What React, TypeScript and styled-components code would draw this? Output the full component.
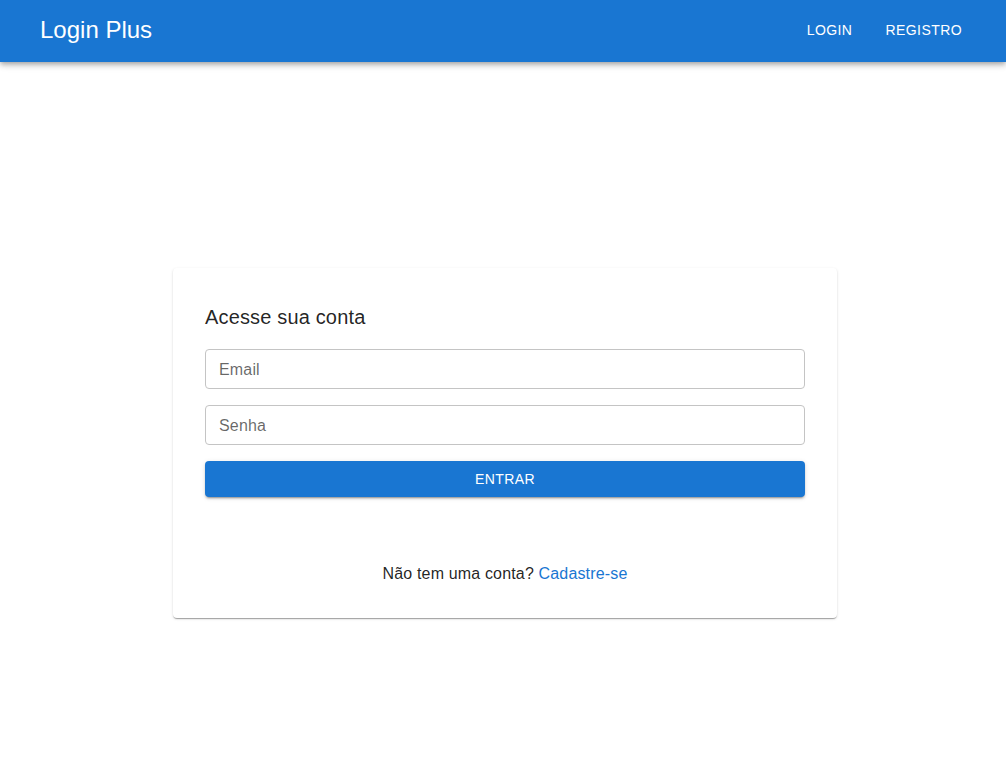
import React from "react";
import styled, { createGlobalStyle } from "styled-components";

const GlobalStyle = createGlobalStyle`
  *, *::before, *::after { box-sizing: border-box; }
  body {
    margin: 0;
    background: #fff;
    color: rgba(0, 0, 0, 0.87);
    font-family: "Liberation Sans", Arial, sans-serif;
    font-size: 16px;
    line-height: 24px;
    letter-spacing: 0.01em;
  }
`;

const Page = styled.div`
  display: flex;
  flex-direction: column;
  min-height: 100vh;
`;

const AppBar = styled.header`
  display: flex;
  align-items: center;
  justify-content: space-between;
  padding: 12px 36px 14px 40px;
  background: #1976d2;
  color: #fff;
  box-shadow:
    0 2px 4px -1px rgba(0, 0, 0, 0.2),
    0 4px 5px 0 rgba(0, 0, 0, 0.14),
    0 1px 10px 0 rgba(0, 0, 0, 0.12);
`;

const Brand = styled.div`
  font-size: 24px;
  line-height: 36px;
  letter-spacing: normal;
`;

const Nav = styled.nav`
  display: flex;
  gap: 16px;
`;

const NavLink = styled.a`
  min-width: 64px;
  padding: 6px 8px;
  border-radius: 4px;
  color: inherit;
  font-size: 14px;
  font-weight: 500;
  line-height: 24px;
  letter-spacing: 0.03em;
  text-align: center;
  text-decoration: none;
  text-transform: uppercase;
`;

const Main = styled.main`
  display: flex;
  flex: 1;
  flex-direction: column;
  align-items: center;
  justify-content: center;
  padding: 43px 24px 0 28px;
`;

const Card = styled.section`
  width: 100%;
  max-width: 664px;
  padding: 33px 32px 32px;
  border-radius: 4px;
  background: #fff;
  box-shadow:
    0 2px 1px -1px rgba(0, 0, 0, 0.2),
    0 1px 1px 0 rgba(0, 0, 0, 0.14),
    0 1px 3px 0 rgba(0, 0, 0, 0.12);
`;

const Title = styled.h1`
  margin: 0;
  font-size: 20px;
  font-weight: 400;
  line-height: 32px;
`;

const Form = styled.form`
  display: flex;
  flex-direction: column;
  gap: 16px;
  margin-top: 16px;
`;

const Field = styled.input`
  width: 100%;
  height: 40px;
  padding: 9px 13px 7px;
  border: 1px solid #c4c4c4;
  border-radius: 4px;
  background: transparent;
  color: inherit;
  font: inherit;
  letter-spacing: inherit;

  &::placeholder {
    color: rgba(0, 0, 0, 0.6);
    opacity: 1;
  }

  &:focus {
    border-color: #1976d2;
    outline: none;
  }
`;

const SubmitButton = styled.button`
  padding: 6px 16px;
  border: 0;
  border-radius: 4px;
  background: #1976d2;
  color: #fff;
  font-family: inherit;
  font-size: 14px;
  font-weight: 500;
  line-height: 24px;
  letter-spacing: 0.03em;
  text-transform: uppercase;
  cursor: pointer;
  box-shadow:
    0 3px 1px -2px rgba(0, 0, 0, 0.2),
    0 2px 2px 0 rgba(0, 0, 0, 0.14),
    0 1px 5px 0 rgba(0, 0, 0, 0.12);
`;

const SignUp = styled.p`
  margin: 65px 0 0;
  text-align: center;
`;

const SignUpLink = styled.a`
  color: #1976d2;
  text-decoration: none;
`;

export default function App() {
  return (
    <>
      <GlobalStyle />
      <Page>
        <AppBar>
          <Brand>Login Plus</Brand>
          <Nav>
            <NavLink href="#login">Login</NavLink>
            <NavLink href="#registro">Registro</NavLink>
          </Nav>
        </AppBar>
        <Main>
          <Card>
            <Title>Acesse sua conta</Title>
            <Form onSubmit={(event: React.FormEvent) => event.preventDefault()}>
              <Field type="email" name="email" placeholder="Email" aria-label="Email" />
              <Field type="password" name="senha" placeholder="Senha" aria-label="Senha" />
              <SubmitButton type="submit">Entrar</SubmitButton>
            </Form>
            <SignUp>
              Não tem uma conta? <SignUpLink href="#registro">Cadastre-se</SignUpLink>
            </SignUp>
          </Card>
        </Main>
      </Page>
    </>
  );
}
